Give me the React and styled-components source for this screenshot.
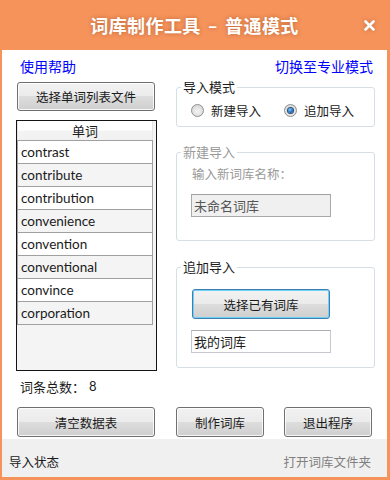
import React, { useState } from 'react';
import styled, { createGlobalStyle, css } from 'styled-components';

const GlobalStyle = createGlobalStyle`
  html, body {
    margin: 0;
    padding: 0;
    background: #ffffff;
  }
  * {
    box-sizing: border-box;
  }
`;

const FONT = `Lato, 'Noto Sans CJK SC', sans-serif`;
const ORANGE = '#f5935b';

const words = [
  'contrast',
  'contribute',
  'contribution',
  'convenience',
  'convention',
  'conventional',
  'convince',
  'corporation',
];

const App = () => {
  const [mode, setMode] = useState('append');
  return (
    <>
      <GlobalStyle />
      <Window>
        <TitleBar>
          <span />
          <Title>词库制作工具 – 普通模式</Title>
          <CloseButton aria-label="close">
            <svg width="11" height="11" viewBox="0 0 11 11">
              <path d="M1.5 1.5 L9.5 9.5 M9.5 1.5 L1.5 9.5" stroke="#fff" strokeWidth="2.6" strokeLinecap="round" />
            </svg>
          </CloseButton>
        </TitleBar>
        <Body>
          <LinkRow>
            <Link>使用帮助</Link>
            <Link>切换至专业模式</Link>
          </LinkRow>
          <Main>
            <LeftColumn>
              <Button $width={138} $height={29} $offset={1}>
                选择单词列表文件
              </Button>
              <WordList>
                <HeaderCell>单词</HeaderCell>
                {words.map((word, i) => (
                  <WordRow key={word} $odd={i % 2 === 1} $last={i === words.length - 1}>
                    {word}
                  </WordRow>
                ))}
              </WordList>
              <CountRow>
                词条总数：<CountValue>8</CountValue>
              </CountRow>
            </LeftColumn>
            <RightColumn>
              <GroupBox $top={5} $height={40}>
                <Legend>导入模式</Legend>
                <RadioRow>
                  <RadioItem $width={93} onClick={() => setMode('new')}>
                    <RadioCircle $checked={mode === 'new'} />
                    新建导入
                  </RadioItem>
                  <RadioItem onClick={() => setMode('append')}>
                    <RadioCircle $checked={mode === 'append'} />
                    追加导入
                  </RadioItem>
                </RadioRow>
              </GroupBox>
              <GroupBox $top={25} $height={89}>
                <Legend $disabled>新建导入</Legend>
                <FieldLabel>输入新词库名称：</FieldLabel>
                <TextInput $disabled $top={10} readOnly value="未命名词库" />
              </GroupBox>
              <GroupBox $top={26} $height={101}>
                <Legend>追加导入</Legend>
                <GroupContent>
                  <Button $width={138} $height={30} $offset={1} $focused>
                    选择已有词库
                  </Button>
                  <TextInput $top={11} readOnly value="我的词库" />
                </GroupContent>
              </GroupBox>
            </RightColumn>
          </Main>
          <Footer>
            <Button $width={138} $height={30}>清空数据表</Button>
            <Button $width={88} $height={30}>制作词库</Button>
            <Button $width={88} $height={30}>退出程序</Button>
          </Footer>
        </Body>
        <StatusBar>
          <StatusText>导入状态</StatusText>
          <StatusLink>打开词库文件夹</StatusLink>
        </StatusBar>
      </Window>
    </>
  );
};

const Window = styled.div`
  width: 390px;
  height: 480px;
  display: flex;
  flex-direction: column;
  padding: 0 3px 3px 2px;
  background: ${ORANGE};
  font-family: ${FONT};
  color: #1b1b1b;
`;

const TitleBar = styled.div`
  height: 50px;
  flex-shrink: 0;
  display: grid;
  grid-template-columns: 1fr auto 1fr;
  align-items: center;
`;

const Title = styled.div`
  font-size: 18px;
  font-weight: bold;
  color: #ffffff;
  letter-spacing: 0.4px;
  word-spacing: 2px;
  text-shadow: 0 0 4px rgba(120, 50, 10, 0.45);
`;

const CloseButton = styled.div`
  justify-self: end;
  margin-right: 12px;
  margin-top: 1px;
  display: flex;
  filter: drop-shadow(0 0 2px rgba(120, 50, 10, 0.4));
`;

const Body = styled.div`
  flex: 1;
  display: flex;
  flex-direction: column;
  background: #ffffff;
`;

const LinkRow = styled.div`
  height: 32px;
  display: flex;
  align-items: center;
  justify-content: space-between;
  padding: 0 14px 0 18px;
`;

const Link = styled.span`
  font-size: 14px;
  color: #0000ff;
  cursor: pointer;
`;

const Main = styled.div`
  display: flex;
  padding-left: 14px;
`;

const LeftColumn = styled.div`
  width: 141px;
  display: flex;
  flex-direction: column;
`;

const Button = styled.button`
  width: ${({ $width }) => $width}px;
  height: ${({ $height }) => $height}px;
  margin-left: ${({ $offset }) => $offset || 0}px;
  padding: 0;
  border: 1px solid #707070;
  border-radius: 3px;
  font-family: ${FONT};
  font-size: 12.5px;
  color: #1b1b1b;
  background: linear-gradient(#f2f2f2 0%, #ebebeb 50%, #dddddd 50%, #cfcfcf 100%);
  box-shadow: inset 0 0 0 1px rgba(255, 255, 255, 0.8);
  ${({ $focused }) =>
    $focused &&
    css`
      border-color: #3c7fb1;
      box-shadow: inset 0 0 0 1px #6fd0f8;
    `}
`;

const WordList = styled.div`
  margin-top: 9px;
  height: 251px;
  border: 1px solid #141414;
  background: #f4f4f4;
  padding-right: 3px;
  display: flex;
  flex-direction: column;
`;

const HeaderCell = styled.div`
  height: 19px;
  display: flex;
  align-items: center;
  justify-content: center;
  font-size: 13px;
  background: linear-gradient(#ffffff 0%, #ffffff 45%, #f3f3f3 55%, #f1f1f1 100%);
  border-left: 1px solid #e4e4e4;
  border-right: 1px solid #e4e4e4;
`;

const WordRow = styled.div`
  height: ${({ $last }) => ($last ? 24 : 23)}px;
  display: flex;
  align-items: center;
  padding-left: 3px;
  font-size: 13.5px;
  border: 1px solid #a0a0a0;
  border-bottom: ${({ $last }) => ($last ? '1px solid #a0a0a0' : 'none')};
  background: ${({ $odd }) => ($odd ? '#f4f4f4' : '#ffffff')};
`;

const CountRow = styled.div`
  height: 30px;
  display: flex;
  align-items: center;
  padding-left: 4px;
  font-size: 13px;
`;

const CountValue = styled.span`
  margin-left: 4px;
`;

const RightColumn = styled.div`
  width: 199px;
  margin-left: 19px;
  display: flex;
  flex-direction: column;
`;

const GroupBox = styled.div`
  position: relative;
  margin-top: ${({ $top }) => $top}px;
  height: ${({ $height }) => $height}px;
  border: 1px solid #d5dfe5;
  border-radius: 3px;
  padding: 0 0 0 14px;
`;

const Legend = styled.span`
  position: absolute;
  top: -9px;
  left: 4px;
  padding: 0 2px;
  line-height: 16px;
  font-size: 13px;
  background: #ffffff;
  color: ${({ $disabled }) => ($disabled ? '#9a9a9a' : '#1b1b1b')};
`;

const RadioRow = styled.div`
  margin-top: 12px;
  height: 20px;
  display: flex;
  align-items: center;
`;

const RadioItem = styled.label`
  width: ${({ $width }) => ($width ? `${$width}px` : 'auto')};
  display: flex;
  align-items: center;
  gap: 7px;
  font-size: 12.5px;
  cursor: pointer;
`;

const RadioCircle = styled.span`
  width: 13px;
  height: 13px;
  border-radius: 50%;
  border: 1px solid #8e8f8f;
  background: radial-gradient(circle at 50% 60%, #f4f4f4 0%, #dedede 60%, #cfcfcf 100%);
  display: flex;
  align-items: center;
  justify-content: center;
  &::after {
    content: '';
    width: 5px;
    height: 5px;
    border-radius: 50%;
    display: ${({ $checked }) => ($checked ? 'block' : 'none')};
    background: radial-gradient(circle at 40% 35%, #7fd0ff 0%, #1f6fc2 55%, #0b3f85 100%);
    box-shadow: 0 0 0 1px #264c78;
  }
`;

const FieldLabel = styled.div`
  margin-top: 13px;
  margin-left: 1px;
  line-height: 18px;
  font-size: 12.5px;
  color: #9a9a9a;
`;

const GroupContent = styled.div`
  padding-top: 21px;
  display: flex;
  flex-direction: column;
`;

const TextInput = styled.input`
  display: block;
  width: 140px;
  height: 23px;
  margin-top: ${({ $top }) => $top}px;
  padding: 0 0 0 2px;
  border: 1px solid ${({ $disabled }) => ($disabled ? '#a8a8a8' : '#c5c8cf')};
  border-top-color: ${({ $disabled }) => ($disabled ? '#a0a0a0' : '#abadb3')};
  font-family: ${FONT};
  font-size: 13px;
  color: ${({ $disabled }) => ($disabled ? '#555555' : '#1b1b1b')};
  background: ${({ $disabled }) => ($disabled ? '#f0f0f0' : '#ffffff')};
  outline: none;
`;

const Footer = styled.div`
  display: flex;
  gap: 21px;
  padding-left: 15px;
  margin-top: 6px;
  & > :last-child {
    margin-left: -1px;
  }
`;

const StatusBar = styled.div`
  height: 38px;
  flex-shrink: 0;
  display: flex;
  align-items: flex-end;
  justify-content: space-between;
  padding: 0 16px 6px 7px;
  background: #f0f0f0;
  line-height: 16px;
  font-size: 12.5px;
`;

const StatusText = styled.span`
  color: #1b1b1b;
`;

const StatusLink = styled.span`
  color: #808080;
  cursor: pointer;
`;

export default App;
